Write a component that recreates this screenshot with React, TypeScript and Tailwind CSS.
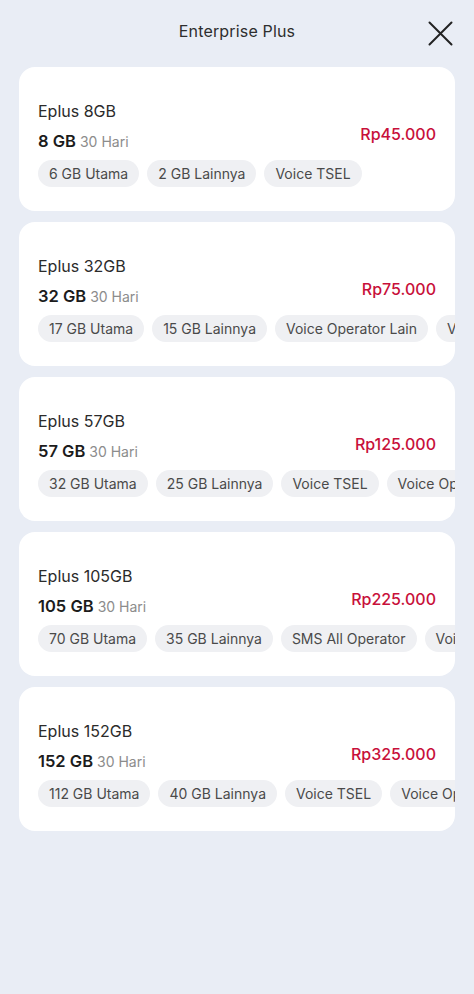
type Plan = {
  name: string;
  size: string;
  price: string;
  chips: string[];
};

const plans: Plan[] = [
  { name: "Eplus 8GB", size: "8 GB", price: "Rp45.000", chips: ["6 GB Utama", "2 GB Lainnya", "Voice TSEL"] },
  { name: "Eplus 32GB", size: "32 GB", price: "Rp75.000", chips: ["17 GB Utama", "15 GB Lainnya", "Voice Operator Lain", "Voice TSEL"] },
  { name: "Eplus 57GB", size: "57 GB", price: "Rp125.000", chips: ["32 GB Utama", "25 GB Lainnya", "Voice TSEL", "Voice Operator Lain"] },
  { name: "Eplus 105GB", size: "105 GB", price: "Rp225.000", chips: ["70 GB Utama", "35 GB Lainnya", "SMS All Operator", "Voice TSEL"] },
  { name: "Eplus 152GB", size: "152 GB", price: "Rp325.000", chips: ["112 GB Utama", "40 GB Lainnya", "Voice TSEL", "Voice Operator Lain"] },
];

function PlanCard({ plan }: { plan: Plan }) {
  return (
    <div className="bg-white rounded-2xl pl-[19px] pt-[33px] pb-[24px] overflow-hidden">
      <div className="flex items-center pr-[19px]">
        <div className="flex-1 min-w-0">
          <p className="text-[16px] leading-[22px] text-[#2b2b2b]">{plan.name}</p>
          <p className="mt-[8px] leading-[22px]">
            <span className="text-[16.5px] font-semibold text-[#1c1c1c]">{plan.size}</span>
            <span className="ml-[4px] text-[14px] text-[#8c8c8c]">30 Hari</span>
          </p>
        </div>
        <span className="mt-[14px] text-[16px] font-medium text-[#c8103a]">{plan.price}</span>
      </div>
      {/* chips run past the card edge and get clipped */}
      <div className="mt-[7px] flex gap-[8px] whitespace-nowrap overflow-hidden">
        {plan.chips.map((c) => (
          <span
            key={c}
            className="shrink-0 h-[27px] px-[11px] flex items-center rounded-full bg-[#eff0f3] text-[14px] text-[#4a4a4a]"
          >
            {c}
          </span>
        ))}
      </div>
    </div>
  );
}

export default function App() {
  return (
    <div
      className="min-h-[994px] bg-[#e9edf5] px-[19px]"
      style={{ fontFamily: "Inter, 'Open Sans', sans-serif" }}
    >
      <div className="relative h-[62px] flex items-center justify-center">
        <h1 className="text-[16px] text-[#2e2e2e] tracking-[0.01em]">Enterprise Plus</h1>
        <button className="absolute right-[2px] top-[21px] text-[#222]">
          <svg width="25" height="25" viewBox="0 0 25 25" fill="none" stroke="currentColor" strokeWidth="2" strokeLinecap="round">
            <path d="M1.5 1.5 L23.5 23.5 M23.5 1.5 L1.5 23.5" />
          </svg>
        </button>
      </div>
      <div className="mt-[5px] flex flex-col gap-[11px]">
        {plans.map((p) => (
          <PlanCard key={p.name} plan={p} />
        ))}
      </div>
    </div>
  );
}
